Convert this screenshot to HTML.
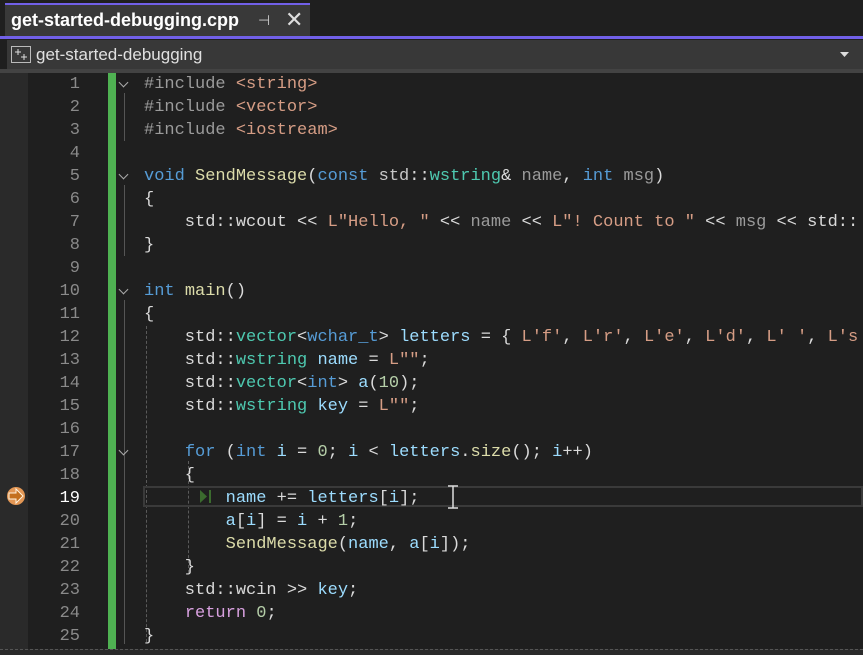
<!DOCTYPE html><html><head><style>
html,body{margin:0;width:863px;height:655px;overflow:hidden}
body{background:#1f1f1f;position:relative;font-family:"Liberation Sans",sans-serif}
.tabbar{position:absolute;left:0;top:0;width:863px;height:36px;background:#1f1f1f}
.tab{position:absolute;left:5px;top:3px;width:305px;height:33px;background:#393939;border-top:2px solid #7160e8;box-sizing:border-box}
.tab .t{position:absolute;left:6px;top:5px;color:#fff;font-weight:bold;font-size:18px}
.pl{position:absolute;left:0;top:36px;width:863px;height:3px;background:#7160e8}
.nav{position:absolute;left:7px;top:40px;width:856px;height:29px;background:#383838}
.navb{position:absolute;left:0;top:69px;width:863px;height:4px;background:#434343}
.nav .t{position:absolute;left:29px;top:5px;color:#e0e0e0;font-size:17px}
.gut{position:absolute;left:0;top:73px;width:28px;height:576px;background:#2a2a2a}
.green{position:absolute;left:108px;top:73px;width:8px;height:576px;background:#4fb152}
.code{position:absolute;left:0;top:73px;width:863px;height:576px;overflow:hidden;font-family:"Liberation Mono",monospace;font-size:17px;line-height:23px;color:#dadada;white-space:pre}
.code>div{position:absolute;left:0;width:863px;height:23px}
.ln{position:absolute;left:20px;width:60px;text-align:right;color:#8a8a8a}
.c{position:absolute;left:144px}
.k{color:#569cd6}.f{color:#dcdcaa}.s{color:#d69d85}.ty{color:#4ec9b0}.v{color:#9cdcfe}.p{color:#9b9b9b}.n{color:#b5cea8}.w{color:#c8c8c8}
.chev{position:absolute;left:120px;width:6px;height:6px;border-right:1.5px solid #aaa;border-bottom:1.5px solid #aaa;transform:rotate(45deg)}
.vl{position:absolute;left:124px;width:1px;background:#555}
.dl{position:absolute;width:0;border-left:1px dashed #5a5a5a}
.bottom{position:absolute;left:0;top:649px;width:863px;height:6px;background:#2a2a2a;border-top:1px dashed #555}
</style></head><body>
<div class="tabbar"></div>
<div class="tab"><span class="t">get-started-debugging.cpp</span>
<span style="position:absolute;left:253px;top:7px;color:#ccc;font-size:14px">⊣</span>
<span style="position:absolute;left:280px;top:2px;color:#ddd;font-size:22px">✕</span></div>
<div class="pl"></div>
<div class="nav"><svg style="position:absolute;left:4px;top:6px" width="20" height="17"><rect x="0.5" y="0.5" width="19" height="16" fill="none" stroke="#bbb"/><path d="M4 6h6M7 3v6M10 11h6M13 8v6" stroke="#ddd"/></svg><span class="t">get-started-debugging</span>
<svg style="position:absolute;left:833px;top:12px" width="9" height="6"><path d="M0 0h9L4.5 5z" fill="#ddd"/></svg></div>
<div class="navb"></div>
<div class="gut"></div>
<div class="green"></div>
<div class="bottom"></div>
<div class="vl" style="top:93px;height:48px"></div>
<div class="vl" style="top:185px;height:71px"></div>
<div class="vl" style="top:300px;height:344px"></div>
<div class="dl" style="left:146px;top:326px;height:316px"></div>
<div class="dl" style="left:188px;top:461px;height:112px"></div>
<div class="chev" style="top:79px"></div><div class="chev" style="top:171px"></div><div class="chev" style="top:286px"></div><div class="chev" style="top:447px"></div>
<div style="position:absolute;left:143px;top:486px;width:720px;height:21px;border:2px solid #3a3a3a;box-sizing:border-box"></div>
<svg style="position:absolute;left:5px;top:486px" width="22" height="20"><circle cx="11" cy="10" r="9" fill="#e39755"/><path d="M4 7h7V3l7 7-7 7v-4H4z" fill="#c4701e" stroke="#fff3e0" stroke-width="1"/></svg>
<svg style="position:absolute;left:200px;top:490px" width="12" height="13"><path d="M0 0l7 6.5L0 13z" fill="#3b6b2e"/><rect x="9" y="0" width="2" height="13" fill="#3b6b2e"/></svg>
<svg style="position:absolute;left:446px;top:485px" width="14" height="24"><path d="M2 1h10M7 1v22M2 23h10" stroke="#ddd" stroke-width="1.5"/></svg>
<div class="code">
<div style="top:0"><span class="ln">1</span><span class="c"><span class="p">#include</span> <span class="s">&lt;string&gt;</span></span></div>
<div style="top:23px"><span class="ln">2</span><span class="c"><span class="p">#include</span> <span class="s">&lt;vector&gt;</span></span></div>
<div style="top:46px"><span class="ln">3</span><span class="c"><span class="p">#include</span> <span class="s">&lt;iostream&gt;</span></span></div>
<div style="top:69px"><span class="ln">4</span></div>
<div style="top:92px"><span class="ln">5</span><span class="c"><span class="k">void</span> <span class="f">SendMessage</span>(<span class="k">const</span> <span class="w">std</span>::<span class="ty">wstring</span>&amp; <span class="p">name</span>, <span class="k">int</span> <span class="p">msg</span>)</span></div>
<div style="top:115px"><span class="ln">6</span><span class="c">{</span></div>
<div style="top:138px"><span class="ln">7</span><span class="c">    std::wcout &lt;&lt; <span class="s">L"Hello, "</span> &lt;&lt; <span class="p">name</span> &lt;&lt; <span class="s">L"! Count to "</span> &lt;&lt; <span class="p">msg</span> &lt;&lt; std::</span></div>
<div style="top:161px"><span class="ln">8</span><span class="c">}</span></div>
<div style="top:184px"><span class="ln">9</span></div>
<div style="top:207px"><span class="ln">10</span><span class="c"><span class="k">int</span> <span class="f">main</span>()</span></div>
<div style="top:230px"><span class="ln">11</span><span class="c">{</span></div>
<div style="top:253px"><span class="ln">12</span><span class="c">    std::<span class="ty">vector</span>&lt;<span class="k">wchar_t</span>&gt; <span class="v">letters</span> = { <span class="s">L'f'</span>, <span class="s">L'r'</span>, <span class="s">L'e'</span>, <span class="s">L'd'</span>, <span class="s">L' '</span>, <span class="s">L's</span></span></div>
<div style="top:276px"><span class="ln">13</span><span class="c">    std::<span class="ty">wstring</span> <span class="v">name</span> = <span class="s">L""</span>;</span></div>
<div style="top:299px"><span class="ln">14</span><span class="c">    std::<span class="ty">vector</span>&lt;<span class="k">int</span>&gt; <span class="v">a</span>(<span class="n">10</span>);</span></div>
<div style="top:322px"><span class="ln">15</span><span class="c">    std::<span class="ty">wstring</span> <span class="v">key</span> = <span class="s">L""</span>;</span></div>
<div style="top:345px"><span class="ln">16</span></div>
<div style="top:368px"><span class="ln">17</span><span class="c">    <span class="k">for</span> (<span class="k">int</span> <span class="v">i</span> = <span class="n">0</span>; <span class="v">i</span> &lt; <span class="v">letters</span>.<span class="f">size</span>(); <span class="v">i</span>++)</span></div>
<div style="top:391px"><span class="ln">18</span><span class="c">    {</span></div>
<div style="top:414px"><span class="ln" style="color:#fff">19</span><span class="c">        <span class="v">name</span> += <span class="v">letters</span>[<span class="v">i</span>];</span></div>
<div style="top:437px"><span class="ln">20</span><span class="c">        <span class="v">a</span>[<span class="v">i</span>] = <span class="v">i</span> + <span class="n">1</span>;</span></div>
<div style="top:460px"><span class="ln">21</span><span class="c">        <span class="f">SendMessage</span>(<span class="v">name</span>, <span class="v">a</span>[<span class="v">i</span>]);</span></div>
<div style="top:483px"><span class="ln">22</span><span class="c">    }</span></div>
<div style="top:506px"><span class="ln">23</span><span class="c">    std::wcin &gt;&gt; <span class="v">key</span>;</span></div>
<div style="top:529px"><span class="ln">24</span><span class="c">    <span class="k" style="color:#d8a0df">return</span> <span class="n">0</span>;</span></div>
<div style="top:552px"><span class="ln">25</span><span class="c">}</span></div>
</div>
</body></html>
